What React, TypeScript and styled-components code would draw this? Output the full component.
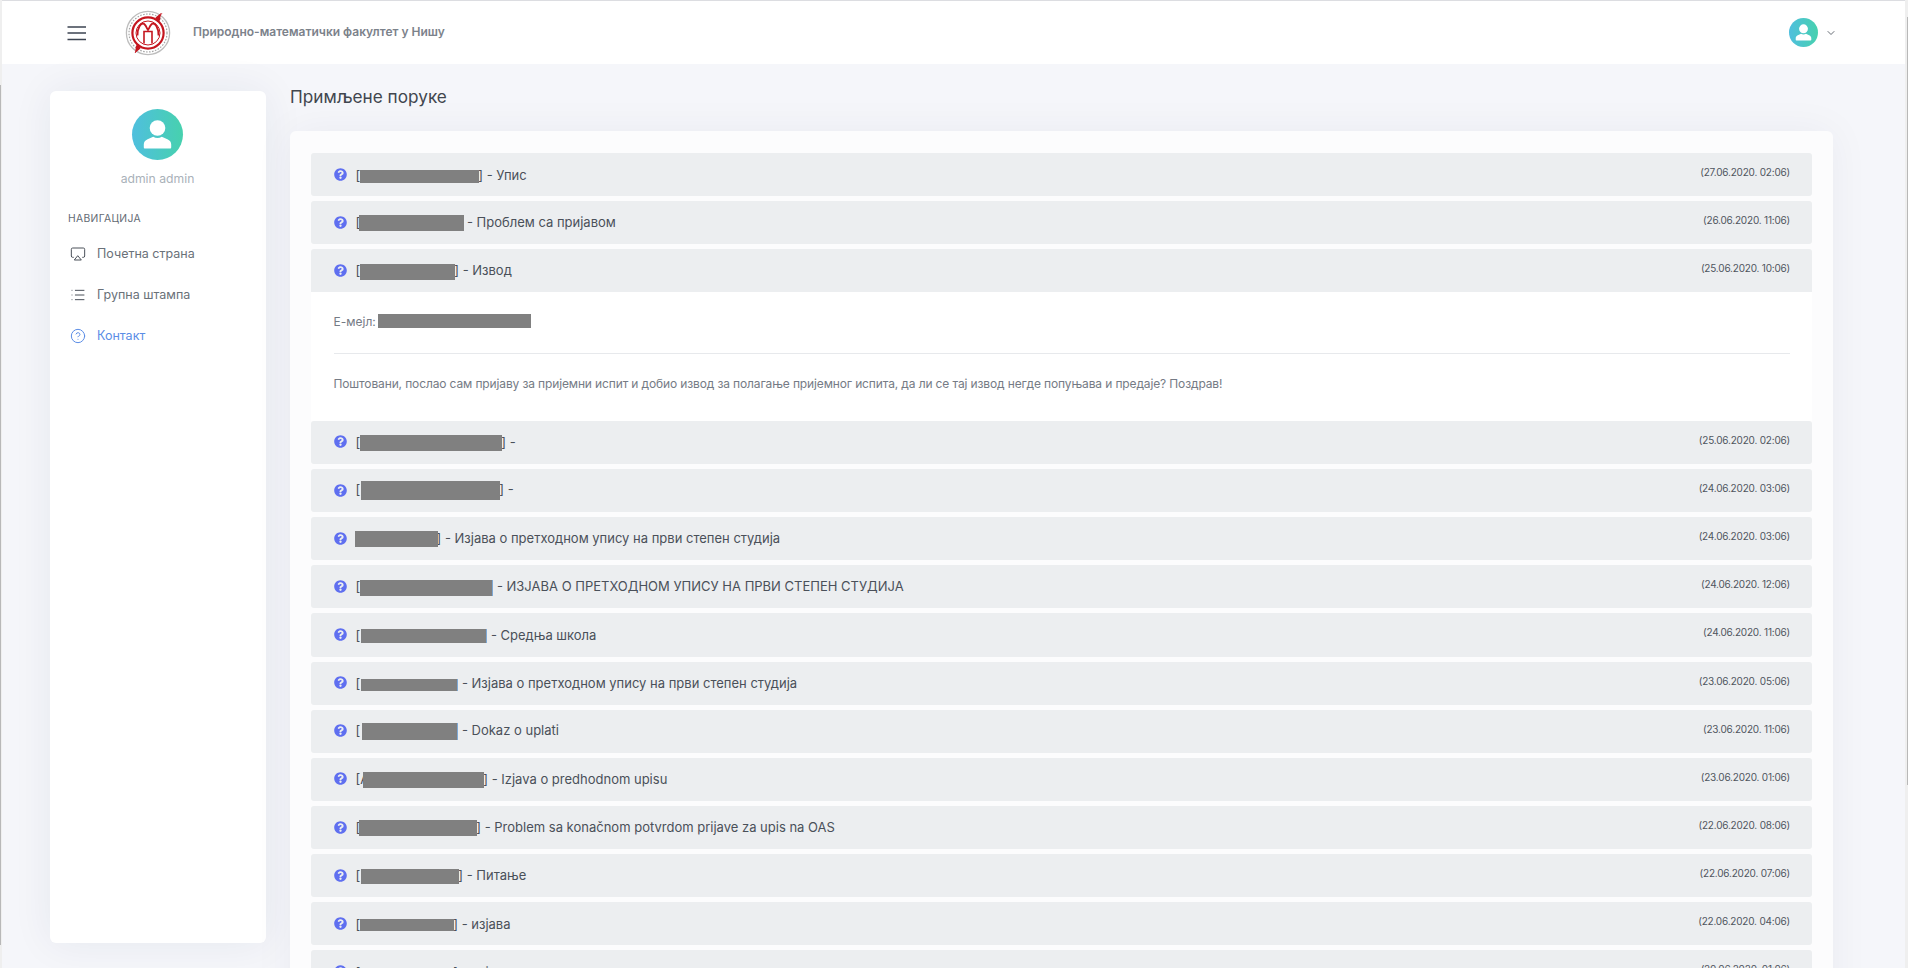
import React from "react";
import styled, { createGlobalStyle } from "styled-components";
import { Airplay, List, CircleHelp, ChevronDown } from "lucide-react";
import { FaQuestionCircle } from "react-icons/fa";

const Global = createGlobalStyle`
  html, body { margin: 0; padding: 0; height: 100%; overflow: hidden; background: #f5f6fa; }
  * { box-sizing: border-box; }
  body { font-family: Inter, "Noto Sans", "Liberation Sans", sans-serif; }
`;

const Page = styled.div`
  height: 968px;
  overflow: hidden;
  padding: 1px 3px 0 2px;
  background: #f5f6fa;
`;
const TopBar = styled.header`
  height: 63px;
  background: #fff;
  display: flex;
  align-items: center;
  padding: 0 0 0 65px;
`;
const Burger = styled.svg`
  width: 20px;
  height: 16px;
  margin-right: 38px;
  flex: none;
`;
const Logo = styled.svg`
  width: 46px;
  height: 46px;
  flex: none;
  margin-right: 22px;
`;
const School = styled.div`
  font-size: 12px;
  font-weight: 600;
  color: #7c828b;
  margin-top: -3px;
  flex: 1;
`;
const UserMenu = styled.div`
  display: flex;
  align-items: center;
  margin-right: 68px;
  color: #3f4650;
  gap: 7px;
`;
const AvatarCircle = styled.div<{ $size: number }>`
  width: ${(p) => p.$size}px;
  height: ${(p) => p.$size}px;
  border-radius: 50%;
  background: linear-gradient(90deg, #4fbfde, #47d1ae);
  display: flex;
  align-items: center;
  justify-content: center;
  flex: none;
`;
const Body = styled.div`
  display: flex;
  align-items: flex-start;
  gap: 24px;
  padding: 12px 72px 0 48px;
`;
const Sidebar = styled.aside`
  width: 216px;
  height: 852px;
  margin-top: 15px;
  flex: none;
  background: #fff;
  border-radius: 6px;
  box-shadow: 0 0 40px rgba(30, 40, 80, 0.07);
  padding: 18px 18px 0;
  display: flex;
  flex-direction: column;
`;
const SideUser = styled.div`
  display: flex;
  flex-direction: column;
  align-items: center;
  gap: 11px;
  margin-left: -1px;
`;
const SideName = styled.div`
  font-size: 12.2px;
  line-height: 16px;
  color: #a9b1b9;
`;
const NavTitle = styled.div`
  font-size: 10.3px;
  line-height: 14px;
  letter-spacing: 0.35px;
  color: #636a73;
  margin-top: 24px;
  margin-bottom: 8px;
`;
const NavItem = styled.div<{ $active?: boolean }>`
  height: 41px;
  display: flex;
  align-items: center;
  gap: 11px;
  padding-left: 2px;
  font-size: 12.5px;
  color: ${(p) => (p.$active ? "#5b8de6" : "#6a7179")};
  svg {
    color: ${(p) => (p.$active ? "#5b8de6" : "#4a5059")};
  }
`;
const Main = styled.main`
  flex: 1;
  min-width: 0;
`;
const Title = styled.h1`
  margin: 0 0 15px;
  height: 40px;
  display: flex;
  align-items: center;
  font-size: 17.2px;
  font-weight: 400;
  color: #41464e;
`;
const Card = styled.section`
  background: #fcfcfd;
  border-radius: 6px 6px 0 0;
  padding: 22px 21px;
  box-shadow: 0 0 40px rgba(30, 40, 80, 0.05);
`;
const Row = styled.div`
  height: 43.15px;
  margin-bottom: 5px;
  background: #eceef0;
  border-radius: 3px;
  display: flex;
  align-items: center;
  padding: 0 22px 0 23px;
  &[data-open="true"] {
    margin-bottom: 0;
    border-radius: 3px 3px 0 0;
  }
`;
const Qmark = styled(FaQuestionCircle)`
  width: 13px;
  height: 13px;
  color: #5f6ff0;
  flex: none;
  margin-top: -1px;
  margin-right: 8.5px;
`;
const Subject = styled.div`
  flex: 1;
  font-size: 13px;
  color: #4a5059;
  white-space: pre;
`;
const Redact = styled.span<{ $w: number; $h: number; $l?: number; $edge?: boolean }>`
  display: inline-block;
  vertical-align: middle;
  width: ${(p) => p.$w + (p.$edge ? 1 : 0)}px;
  height: ${(p) => p.$h}px;
  margin-left: ${(p) => p.$l ?? -1}px;
  margin-right: ${(p) => (p.$edge ? 0 : -1)}px;
  border-right: ${(p) => (p.$edge ? "1px solid #7ea9d6" : "0")};
  position: relative;
  background: #808080;
`;
const When = styled.div`
  font-size: 10px;
  letter-spacing: -0.2px;
  color: #4f555e;
  margin-top: -5px;
  white-space: nowrap;
`;
const Panel = styled.div`
  height: 128.4px;
  background: #fff;
  padding: 16px 22px 0 22.5px;
  color: #757b85;
  font-size: 12px;
`;
const MailLine = styled.div`
  height: 26px;
  display: flex;
  align-items: center;
  gap: 2px;
`;
const MailBox = styled.span`
  width: 153px;
  height: 14px;
  background: #808080;
`;
const Rule = styled.hr`
  border: 0;
  border-top: 1px solid #e7e9ec;
  margin: 19px 0 0;
`;
const Msg = styled.p`
  margin: 21px 0 0;
  line-height: 18px;
  letter-spacing: -0.13px;
`;
const ScrollTrack = styled.div<{ $side: "left" | "right" }>`
  position: fixed;
  top: 0;
  bottom: 0;
  ${(p) => p.$side}: 0;
  width: ${(p) => (p.$side === "left" ? 2 : 3)}px;
  background: #efefef;
`;
const ScrollThumb = styled.div<{ $side: "left" | "right"; $top: number; $height: number }>`
  position: fixed;
  ${(p) => p.$side}: 0;
  top: ${(p) => p.$top}px;
  height: ${(p) => p.$height}px;
  width: ${(p) => (p.$side === "left" ? 1 : 1.5)}px;
  background: #b8b8b8;
`;
const TopLine = styled.div`
  position: fixed;
  top: 0;
  left: 0;
  right: 0;
  height: 1px;
  background: #dcdde1;
`;

const Person = ({ size }: { size: number }) => (
  <svg width={size} height={size} viewBox="0 0 51 51" fill="#fff" aria-hidden="true">
    <circle cx="25.5" cy="19" r="7.8" />
    <path d="M13 39.5c-.8 0-1.2-.4-1.2-1.2v-2.8c0-2.6 1.4-4.2 3.8-5.3l5.6-2.4c2.6 1.6 6 1.6 8.6 0l5.6 2.4c2.4 1.1 3.8 2.7 3.8 5.3v2.8c0 .8-.4 1.2-1.2 1.2z" />
  </svg>
);

type Msg = {
  w: number;
  h: number;
  l?: number;
  open?: string;
  close?: string;
  edge?: boolean;
  text: string;
  date: string;
};

const before: Msg[] = [
  { w: 119, h: 13, l: 0, close: "]", text: " - Упис", date: "(27.06.2020. 02:06)" },
  { w: 105, h: 16, l: -1, text: " - Проблем са пријавом", date: "(26.06.2020. 11:06)" },
  { w: 95, h: 16, l: 0, close: "]", text: " - Извод", date: "(25.06.2020. 10:06)" },
];
const after: Msg[] = [
  { w: 142, h: 16, l: 0, close: "]", text: " -", date: "(25.06.2020. 02:06)" },
  { w: 139, h: 19, l: 1, close: "]", text: " -", date: "(24.06.2020. 03:06)" },
  { w: 83, h: 16, l: -1, open: "", close: "]", text: " - Изјава о претходном упису на први степен студија", date: "(24.06.2020. 03:06)" },
  { w: 132, h: 16, l: 0, edge: true, text: " - ИЗЈАВА О ПРЕТХОДНОМ УПИСУ НА ПРВИ СТЕПЕН СТУДИЈА", date: "(24.06.2020. 12:06)" },
  { w: 125, h: 14, l: 1, edge: true, text: " - Средња школа", date: "(24.06.2020. 11:06)" },
  { w: 96, h: 12, l: 1, edge: true, text: " - Изјава о претходном упису на први степен студија", date: "(23.06.2020. 05:06)" },
  { w: 95, h: 17, l: 2, edge: true, text: " - Dokaz o uplati", date: "(23.06.2020. 11:06)" },
  { w: 121, h: 16, l: -6, open: "[А", close: "]", text: " - Izjava o predhodnom upisu", date: "(23.06.2020. 01:06)" },
  { w: 118, h: 16, l: -1, close: "]", text: " - Problem sa konačnom potvrdom prijave za upis na OAS", date: "(22.06.2020. 08:06)" },
  { w: 98, h: 15, l: 1, close: "]", text: " - Питање", date: "(22.06.2020. 07:06)" },
  { w: 94, h: 12, l: 0, close: "]", text: " - изјава", date: "(22.06.2020. 04:06)" },
  { w: 94, h: 0, l: 0, close: "]", text: " - изјава", date: "(20.06.2020. 01:06)" },
];

const MessageRow = ({ m, isOpen }: { m: Msg; isOpen?: boolean }) => (
  <Row data-open={isOpen ? "true" : "false"}>
    <Qmark />
    <Subject>
      {m.open ?? "["}
      <Redact $w={m.w} $h={m.h} $l={m.l} $edge={m.edge} />
      {m.close ?? ""}
      {m.text}
    </Subject>
    <When>{m.date}</When>
  </Row>
);

export default function App() {
  return (
    <Page>
      <Global />
      <TopLine />
      <ScrollTrack $side="left" />
      <ScrollThumb $side="left" $top={85} $height={860} />
      <ScrollTrack $side="right" />
      <ScrollThumb $side="right" $top={17} $height={768} />
      <TopBar>
        <Burger viewBox="0 0 20 16" aria-hidden="true">
          <path d="M0.5 2h18.5M0.5 8h18.5M0.5 14.5h18.5" stroke="#3d4452" strokeWidth="1.4" fill="none" />
        </Burger>
        <Logo viewBox="0 0 46 46" aria-hidden="true">
          <circle cx="23" cy="23" r="21.6" fill="#fff" stroke="#bdbdbd" strokeWidth="1.3" />
          <circle cx="23" cy="23" r="19" fill="none" stroke="#a5a5a5" strokeWidth="1.2" strokeDasharray="1.6 1.4" />
          <path d="M10 43 L37 3" stroke="#c9242f" strokeWidth="0.8" />
          <path d="M30.5 7.5l5.5-4.5-1 7-2 3z M15.5 38.5l-5.5 4.5 1-7 2-3z" fill="#c5161f" />
          <circle cx="23" cy="23" r="15.6" fill="#fff" stroke="#c5161f" strokeWidth="2.2" />
          <circle cx="23" cy="23" r="12" fill="none" stroke="#c5161f" strokeWidth="1" />
          <path d="M12.5 25.5 C12.5 17 16 13.5 18 13.5 C20.5 13.5 21.5 18 23 20 C24.5 18 25.5 13.5 28 13.5 C30 13.5 33.5 17 33.5 25.5" fill="none" stroke="#c5161f" strokeWidth="1.8" />
          <path d="M19 33.5 V21.5 H27 V33.5" fill="none" stroke="#c5161f" strokeWidth="1.6" />
        </Logo>
        <School>Природно-математички факултет у Нишу</School>
        <UserMenu>
          <AvatarCircle $size={29}>
            <Person size={29} />
          </AvatarCircle>
          <ChevronDown size={12} strokeWidth={1.6} />
        </UserMenu>
      </TopBar>
      <Body>
        <Sidebar>
          <SideUser>
            <AvatarCircle $size={51}>
              <Person size={51} />
            </AvatarCircle>
            <SideName>admin admin</SideName>
          </SideUser>
          <NavTitle>НАВИГАЦИЈА</NavTitle>
          <NavItem>
            <Airplay size={16} strokeWidth={1.5} />
            Почетна страна
          </NavItem>
          <NavItem>
            <List size={16} strokeWidth={1.5} />
            Групна штампа
          </NavItem>
          <NavItem $active>
            <CircleHelp size={16} strokeWidth={1.5} />
            Контакт
          </NavItem>
        </Sidebar>
        <Main>
          <Title>Примљене поруке</Title>
          <Card>
            {before.map((m, i) => (
              <MessageRow key={i} m={m} isOpen={i === 2} />
            ))}
            <Panel>
              <MailLine>
                Е-мејл: <MailBox />
              </MailLine>
              <Rule />
              <Msg>
                Поштовани, послао сам пријаву за пријемни испит и добио извод за полагање пријемног испита, да ли се тај извод негде попуњава и предаје? Поздрав!
              </Msg>
            </Panel>
            {after.map((m, i) => (
              <MessageRow key={i} m={m} />
            ))}
          </Card>
        </Main>
      </Body>
    </Page>
  );
}
